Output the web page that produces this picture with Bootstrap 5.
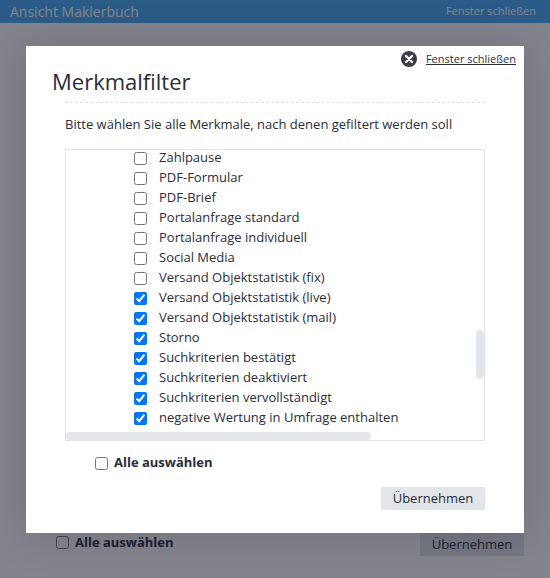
<!DOCTYPE html>
<html lang="de">
<head>
    <meta charset="UTF-8">
    <meta name="viewport" content="width=device-width, initial-scale=1.0">
    <title>Merkmalfilter</title>
    <link href="https://cdn.jsdelivr.net/npm/bootstrap@5.3.0/dist/css/bootstrap.min.css" rel="stylesheet">
    <style>
        html, body { height: 578px; overflow: hidden; }
        body { font-family: "Open Sans", sans-serif; font-size: 13px; color: #2a2d3a; background: #fff; }
        input[type=checkbox] { width: 13px; height: 13px; margin: 0; flex: none; }
        .topbar { height: 23px; background: #48acf4; color: #fff; padding: 0 14px 0 10px; }
        .topbar-title { font-size: 14px; }
        .topbar-link { font-size: 11px; }
        .page-foot { padding: 0 26px 22px 56px; margin-top: auto; }
        .pick-all { font-weight: 700; gap: 6px; }
        .page-foot .pick-all { margin-bottom: 4px; }
        .btn-apply { width: 104px; height: 23px; background: #e2e5ea; border: 0; border-radius: 0; padding: 0; font-size: 13px; color: #2a2d3a; }
        .backdrop { position: absolute; inset: 0; background: rgba(18, 20, 35, .52); }
        .filter-modal { position: absolute; left: 26px; top: 46px; width: 498px; height: 487px; background: #fff; box-shadow: 0 0 40px rgba(20, 20, 40, .18); padding: 5px 8px 0 26px; }
        .close-row { height: 16px; }
        .close-row a { color: #2a2d3a; font-size: 11px; }
        .close-row svg { margin-right: 1px; }
        .filter-title { font-size: 22px; font-weight: 400; line-height: 30px; margin: -1px 0 6px; }
        .filter-body { margin: 0 31px 0 13px; }
        .dash-line { border-top: 1px dashed #dfe1e5; }
        .intro { line-height: 18px; margin: 12px 0 16px; }
        .list-box { position: relative; height: 292px; border: 1px solid #e2e4e8; overflow: hidden; }
        .list-row { height: 20px; line-height: 14px; padding-left: 68px; gap: 12px; white-space: nowrap; }
        .list-rows { margin-top: -2px; }
        .row-text { margin-bottom: 2px; }
        .thumb-v { position: absolute; left: 410px; top: 180px; width: 8px; height: 49px; background: #e2e5ea; border-radius: 4px; }
        .thumb-h { position: absolute; left: 0; bottom: 0; width: 305px; height: 8px; background: #e2e5ea; border-radius: 4px; }
        .pick-row { padding-left: 30px; margin-top: 13px; height: 18px; }
        .apply-row { margin-top: 15px; }
    </style>
</head>
<body class="d-flex flex-column">
    <div class="topbar d-flex justify-content-between align-items-center">
        <span class="topbar-title">Ansicht Maklerbuch</span>
        <span class="topbar-link">Fenster schließen</span>
    </div>
    <div class="page-foot d-flex justify-content-between align-items-end">
        <label class="d-flex align-items-center pick-all"><input type="checkbox"> Alle auswählen</label>
        <button class="btn-apply">Übernehmen</button>
    </div>

    <div class="backdrop"></div>

    <div class="filter-modal">
        <div class="close-row d-flex justify-content-end align-items-center gap-2">
            <svg width="16" height="16" viewBox="0 0 16 16"><circle cx="8" cy="8" r="8" fill="#3c3e48"/><path d="M5 5l6 6M11 5l-6 6" stroke="#fff" stroke-width="2.4" stroke-linecap="round"/></svg>
            <a href="#">Fenster schließen</a>
        </div>
        <h1 class="filter-title">Merkmalfilter</h1>
        <div class="filter-body">
            <div class="dash-line"></div>
            <p class="intro">Bitte wählen Sie alle Merkmale, nach denen gefiltert werden soll</p>
            <div class="list-box">
                <div class="list-rows" id="rows"></div>
                <div class="thumb-v"></div>
                <div class="thumb-h"></div>
            </div>
            <label class="pick-row d-flex align-items-center pick-all mb-0"><input type="checkbox"> Alle auswählen</label>
            <div class="apply-row d-flex justify-content-end"><button class="btn-apply">Übernehmen</button></div>
        </div>
    </div>

    <script>
        const items = [
            ["Zahlpause", false],
            ["PDF-Formular", false],
            ["PDF-Brief", false],
            ["Portalanfrage standard", false],
            ["Portalanfrage individuell", false],
            ["Social Media", false],
            ["Versand Objektstatistik (fix)", false],
            ["Versand Objektstatistik (live)", true],
            ["Versand Objektstatistik (mail)", true],
            ["Storno", true],
            ["Suchkriterien bestätigt", true],
            ["Suchkriterien deaktiviert", true],
            ["Suchkriterien vervollständigt", true],
            ["negative Wertung in Umfrage enthalten", true]
        ];
        const rows = document.getElementById("rows");
        items.forEach(item => {
            rows.innerHTML += `<label class="list-row d-flex align-items-center mb-0">
                <input type="checkbox" ${item[1] ? "checked" : ""}> <span class="row-text">${item[0]}</span>
            </label>`;
        });
    </script>
    <script src="https://cdn.jsdelivr.net/npm/bootstrap@5.3.0/dist/js/bootstrap.bundle.min.js"></script>
</body>
</html>
